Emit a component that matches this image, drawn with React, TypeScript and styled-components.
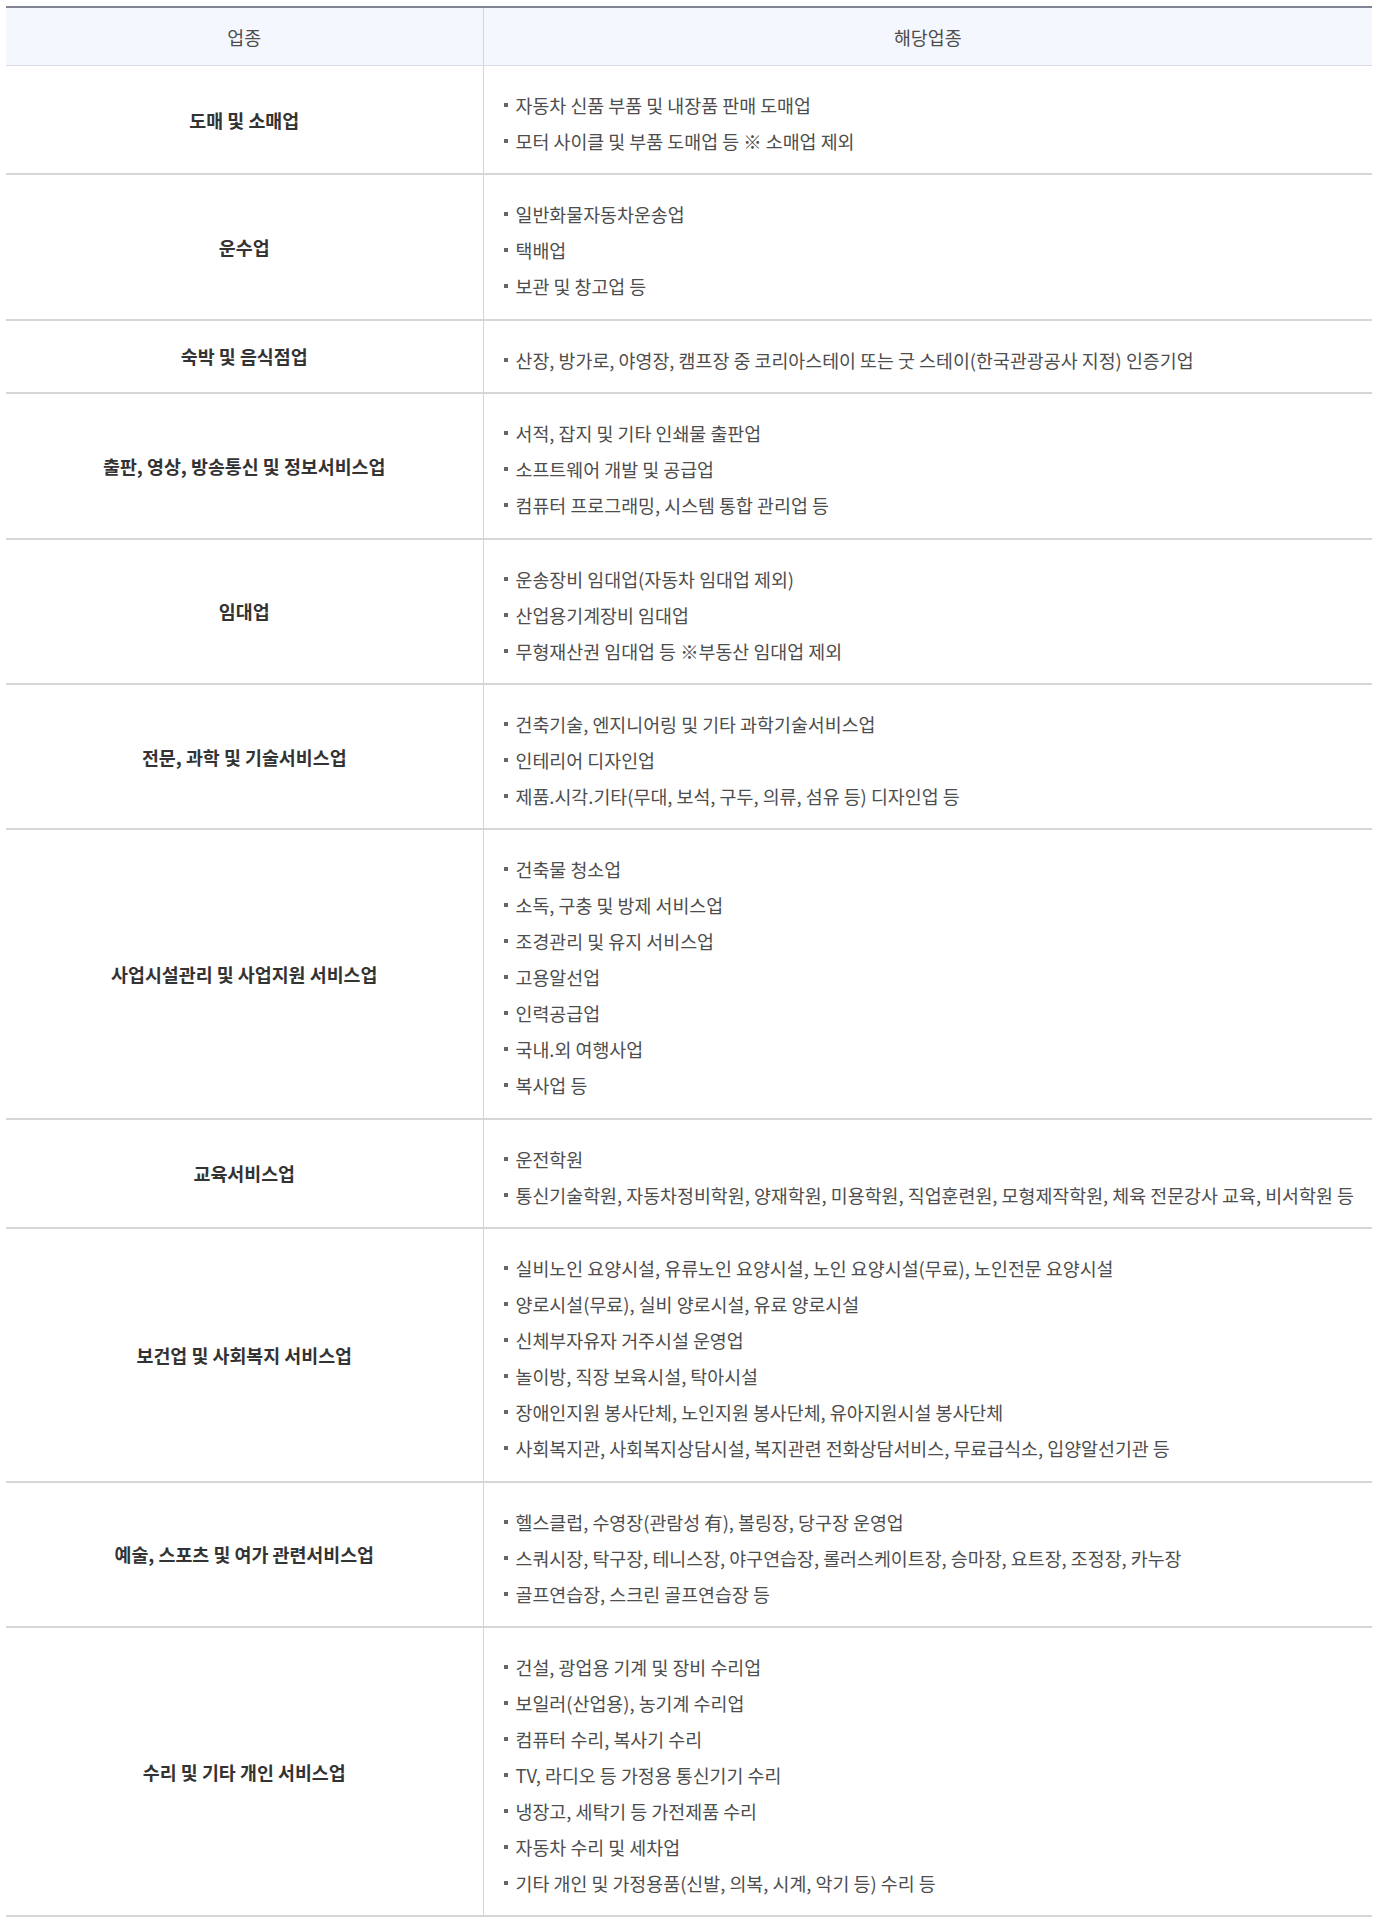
import React from "react";
import styled, { createGlobalStyle } from "styled-components";

const GlobalStyle = createGlobalStyle`
  body {
    margin: 0;
    background: #ffffff;
    font-family: "Noto Sans CJK KR", "Noto Sans", sans-serif;
  }
`;

type Row = { name: string; items: string[] };

const rows: Row[] = [
  {
    name: "도매 및 소매업",
    items: ["자동차 신품 부품 및 내장품 판매 도매업", "모터 사이클 및 부품 도매업 등 ※ 소매업 제외"],
  },
  { name: "운수업", items: ["일반화물자동차운송업", "택배업", "보관 및 창고업 등"] },
  {
    name: "숙박 및 음식점업",
    items: ["산장, 방가로, 야영장, 캠프장 중 코리아스테이 또는 굿 스테이(한국관광공사 지정) 인증기업"],
  },
  {
    name: "출판, 영상, 방송통신 및 정보서비스업",
    items: ["서적, 잡지 및 기타 인쇄물 출판업", "소프트웨어 개발 및 공급업", "컴퓨터 프로그래밍, 시스템 통합 관리업 등"],
  },
  {
    name: "임대업",
    items: ["운송장비 임대업(자동차 임대업 제외)", "산업용기계장비 임대업", "무형재산권 임대업 등 ※부동산 임대업 제외"],
  },
  {
    name: "전문, 과학 및 기술서비스업",
    items: [
      "건축기술, 엔지니어링 및 기타 과학기술서비스업",
      "인테리어 디자인업",
      "제품.시각.기타(무대, 보석, 구두, 의류, 섬유 등) 디자인업 등",
    ],
  },
  {
    name: "사업시설관리 및 사업지원 서비스업",
    items: [
      "건축물 청소업",
      "소독, 구충 및 방제 서비스업",
      "조경관리 및 유지 서비스업",
      "고용알선업",
      "인력공급업",
      "국내.외 여행사업",
      "복사업 등",
    ],
  },
  {
    name: "교육서비스업",
    items: [
      "운전학원",
      "통신기술학원, 자동차정비학원, 양재학원, 미용학원, 직업훈련원, 모형제작학원, 체육 전문강사 교육, 비서학원 등",
    ],
  },
  {
    name: "보건업 및 사회복지 서비스업",
    items: [
      "실비노인 요양시설, 유류노인 요양시설, 노인 요양시설(무료), 노인전문 요양시설",
      "양로시설(무료), 실비 양로시설, 유료 양로시설",
      "신체부자유자 거주시설 운영업",
      "놀이방, 직장 보육시설, 탁아시설",
      "장애인지원 봉사단체, 노인지원 봉사단체, 유아지원시설 봉사단체",
      "사회복지관, 사회복지상담시설, 복지관련 전화상담서비스, 무료급식소, 입양알선기관 등",
    ],
  },
  {
    name: "예술, 스포츠 및 여가 관련서비스업",
    items: [
      "헬스클럽, 수영장(관람성 有), 볼링장, 당구장 운영업",
      "스쿼시장, 탁구장, 테니스장, 야구연습장, 롤러스케이트장, 승마장, 요트장, 조정장, 카누장",
      "골프연습장, 스크린 골프연습장 등",
    ],
  },
  {
    name: "수리 및 기타 개인 서비스업",
    items: [
      "건설, 광업용 기계 및 장비 수리업",
      "보일러(산업용), 농기계 수리업",
      "컴퓨터 수리, 복사기 수리",
      "TV, 라디오 등 가정용 통신기기 수리",
      "냉장고, 세탁기 등 가전제품 수리",
      "자동차 수리 및 세차업",
      "기타 개인 및 가정용품(신발, 의복, 시계, 악기 등) 수리 등",
    ],
  },
];

const Wrap = styled.div`
  width: 1366px;
  margin: 6px auto 0;
`;

const Table = styled.table`
  width: 100%;
  border-collapse: collapse;
  table-layout: fixed;
  border-top: 2px solid #7f8394;
`;

const HeadCell = styled.th<{ $first?: boolean }>`
  height: 57px;
  padding: 0;
  background: #f4f7fd;
  border-bottom: 1px solid #d9dce3;
  border-left: ${(p) => (p.$first ? "none" : "1px solid #d6d6d6")};
  font-size: 18.4px;
  font-weight: 400;
  color: #4d4d4d;
  text-align: center;
  vertical-align: middle;
`;

const BodyRow = styled.tr`
  border-bottom: 2px solid #d6d6d6;
`;

const NameCell = styled.td`
  padding: 17px 10px;
  font-size: 18.4px;
  font-weight: 700;
  color: #333333;
  text-align: center;
  vertical-align: middle;
`;

const ItemCell = styled.td`
  padding: 21px 20px 14.4px;
  border-left: 1px solid #d6d6d6;
  vertical-align: middle;
`;

const List = styled.ul`
  margin: 0;
  padding: 0;
  list-style: none;
`;

const Item = styled.li`
  display: flex;
  align-items: center;
  gap: 8px;
  height: 36px;
  font-size: 18.4px;
  color: #4d4d4d;
  white-space: nowrap;

  &::before {
    content: "";
    flex: none;
    width: 4px;
    height: 4px;
    background: #666666;
  }
`;

export default function App() {
  return (
    <>
      <GlobalStyle />
      <Wrap>
        <Table>
          <colgroup>
            <col style={{ width: "477px" }} />
            <col />
          </colgroup>
          <thead>
            <tr>
              <HeadCell $first>업종</HeadCell>
              <HeadCell>해당업종</HeadCell>
            </tr>
          </thead>
          <tbody>
            {rows.map((row) => (
              <BodyRow key={row.name}>
                <NameCell>{row.name}</NameCell>
                <ItemCell>
                  <List>
                    {row.items.map((item) => (
                      <Item key={item}>{item}</Item>
                    ))}
                  </List>
                </ItemCell>
              </BodyRow>
            ))}
          </tbody>
        </Table>
      </Wrap>
    </>
  );
}
